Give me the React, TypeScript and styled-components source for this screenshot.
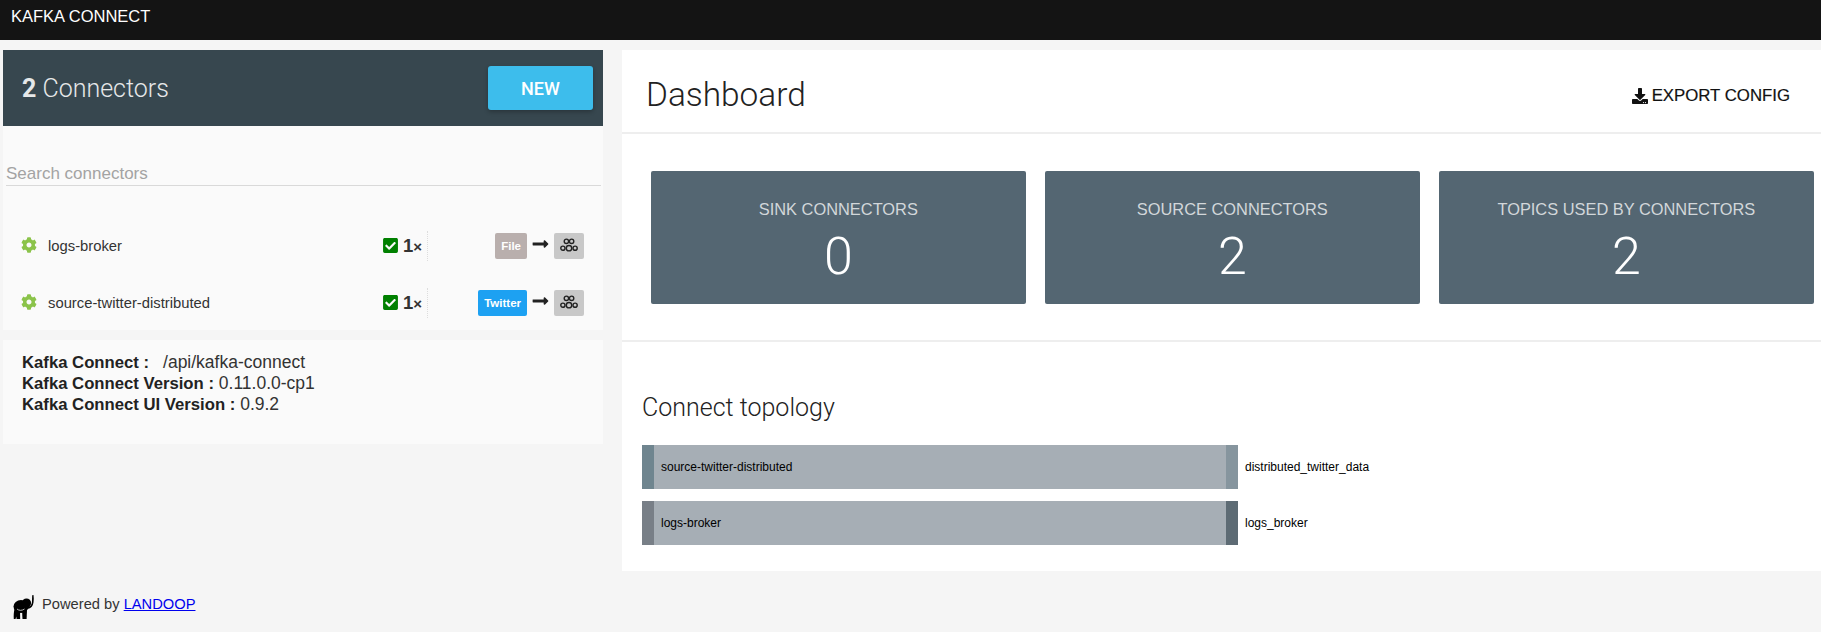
import React from "react";
import styled, { createGlobalStyle } from "styled-components";
import { FaCog, FaCheckSquare, FaDownload, FaLongArrowAltRight } from "react-icons/fa";

const GlobalStyle = createGlobalStyle`
  html, body {
    margin: 0;
    background: #f5f5f5;
    font-family: "Liberation Sans", Arial, sans-serif;
    color: #222;
  }
`;

const connectors = [
  { name: "logs-broker", tag: "File", tagColor: "#b9afad" },
  { name: "source-twitter-distributed", tag: "Twitter", tagColor: "#1da1f2" },
];

const topology = [
  { name: "source-twitter-distributed", topic: "distributed_twitter_data", from: "#6f858f", to: "#86959e" },
  { name: "logs-broker", topic: "logs_broker", from: "#787f87", to: "#5d6b74" },
];

const stats = [
  { label: "SINK CONNECTORS", value: 0 },
  { label: "SOURCE CONNECTORS", value: 2 },
  { label: "TOPICS USED BY CONNECTORS", value: 2 },
];

function KafkaIcon() {
  return (
    <svg width="18" height="15" viewBox="0 0 18 15" fill="none" stroke="#222" strokeWidth="1.4">
      <circle cx="6.4" cy="3.3" r="2.2" />
      <circle cx="11.6" cy="3.3" r="2.2" />
      <circle cx="9" cy="10.2" r="2.7" />
      <circle cx="2.9" cy="10.2" r="2.1" />
      <circle cx="15.1" cy="10.2" r="2.1" />
    </svg>
  );
}

function Elephant() {
  return (
    <svg width="21" height="25" viewBox="0 0 21 25" fill="#000">
      <ellipse cx="8" cy="11.5" rx="7.5" ry="6.5" />
      <circle cx="13.5" cy="8" r="4.6" />
      <path d="M14 11.5c3.500.5 4.800-2 5-5 .1-2 0-4 .2-6.200l1.300-.3c.4 2.500.4 5 0 7.500-.5 3.500-2.500 6-6 6.500z" />
      <path d="M1.500 14h5.500l.2 10H3.600l-.4-2.500-.6 2.500H.8c-.3-3.500 0-7 .7-10z" />
      <path d="M9 15h5l-.4 9H9.500z" />
      <path d="M4 14c2 1.800 5 1.800 7.500 0" fill="none" stroke="#fff" strokeWidth=".7" />
    </svg>
  );
}

export default function App() {
  return (
    <>
      <GlobalStyle />
      <TopBar>KAFKA CONNECT</TopBar>
      <Layout>
        <Sidebar>
          <div>
            <SidebarHeader>
              <Count>
                <strong>2</strong> Connectors
              </Count>
              <NewButton>NEW</NewButton>
            </SidebarHeader>
            <ConnectorPanel>
              <Search placeholder="Search connectors" />
              {connectors.map((c) => (
                <ConnectorRow key={c.name}>
                  <GearIcon />
                  <ConnectorName>{c.name}</ConnectorName>
                  <Tasks>
                    <CheckIcon />
                    <TaskCount>
                      1<small>×</small>
                    </TaskCount>
                  </Tasks>
                  <Flow>
                    <Tag $color={c.tagColor}>{c.tag}</Tag>
                    <ArrowIcon />
                    <KafkaTag>
                      <KafkaIcon />
                    </KafkaTag>
                  </Flow>
                </ConnectorRow>
              ))}
            </ConnectorPanel>
          </div>
          <InfoPanel>
            <InfoLine>
              <b>Kafka Connect :</b>
              <InfoUrl>/api/kafka-connect</InfoUrl>
            </InfoLine>
            <InfoLine>
              <b>Kafka Connect Version :</b> 0.11.0.0-cp1
            </InfoLine>
            <InfoLine>
              <b>Kafka Connect UI Version :</b> 0.9.2
            </InfoLine>
          </InfoPanel>
        </Sidebar>
        <Main>
          <MainHeader>
            <Title>Dashboard</Title>
            <ExportButton>
              <FaDownload size={16} />
              EXPORT CONFIG
            </ExportButton>
          </MainHeader>
          <Stats>
            {stats.map((s) => (
              <StatCard key={s.label}>
                <StatLabel>{s.label}</StatLabel>
                <StatValue>{s.value}</StatValue>
              </StatCard>
            ))}
          </Stats>
          <Topology>
            <TopologyTitle>Connect topology</TopologyTitle>
            {topology.map((t) => (
              <Link key={t.name}>
                <LinkBar $from={t.from} $to={t.to}>
                  {t.name}
                </LinkBar>
                <Topic>{t.topic}</Topic>
              </Link>
            ))}
          </Topology>
        </Main>
      </Layout>
      <Footer>
        <Elephant />
        <span>
          Powered by <a href="#landoop">LANDOOP</a>
        </span>
      </Footer>
    </>
  );
}

const TopBar = styled.div`
  height: 40px;
  background: #141414;
  color: #fff;
  font-size: 16.5px;
  line-height: 16px;
  padding: 8px 0 0 11px;
  box-sizing: border-box;
`;

const Layout = styled.div`
  display: flex;
  align-items: flex-start;
  padding: 10px 0 0 3px;
  gap: 19px;
`;

const Sidebar = styled.div`
  width: 600px;
  display: flex;
  flex-direction: column;
  gap: 10px;
`;

const SidebarHeader = styled.div`
  height: 76px;
  background: #37474f;
  display: flex;
  align-items: center;
  justify-content: space-between;
  padding: 0 10px 0 19px;
`;

const Count = styled.div`
  font-family: Roboto, sans-serif;
  font-weight: 300;
  font-size: 25px;
  color: #e6e8e9;
  strong {
    font-weight: 700;
  }
`;

const NewButton = styled.button`
  width: 105px;
  height: 44px;
  border: 0;
  border-radius: 3px;
  background: #3dbdec;
  color: #fff;
  font-family: Roboto, sans-serif;
  font-size: 18px;
  font-weight: 500;
  box-shadow: 0 2px 4px rgba(0, 0, 0, 0.25);
`;

const ConnectorPanel = styled.div`
  background: #fafafa;
  height: 204px;
  padding-top: 36px;
  box-sizing: border-box;
`;

const Search = styled.input`
  display: block;
  box-sizing: border-box;
  width: 595px;
  height: 24px;
  margin: 0 0 31px 3px;
  padding: 0;
  border: 0;
  border-bottom: 1px solid #d9d9d9;
  background: transparent;
  font-family: inherit;
  font-size: 17px;
  &::placeholder {
    color: #a3a3a3;
  }
`;

const ConnectorRow = styled.div`
  height: 57px;
  display: flex;
  align-items: center;
  padding: 0 19px 0 18px;
`;

const GearIcon = styled(FaCog)`
  width: 16px;
  height: 16px;
  color: #8bc34a;
  margin: -1px 11px 0 0;
`;

const ConnectorName = styled.div`
  font-size: 14.8px;
  color: #333;
  flex: 1;
`;

const Tasks = styled.div`
  display: flex;
  align-items: center;
  width: 45px;
  height: 30px;
  gap: 4px;
  border-right: 1px dotted #ddd;
  box-sizing: border-box;
`;

const CheckIcon = styled(FaCheckSquare)`
  width: 17px;
  height: 17px;
  color: #008000;
  margin-left: -1px;
`;

const TaskCount = styled.div`
  font-size: 18.5px;
  font-weight: 700;
  color: #333;
  small {
    font-size: 15px;
  }
`;

const Flow = styled.div`
  width: 156px;
  display: flex;
  justify-content: flex-end;
  align-items: center;
  gap: 5px;
`;

const ArrowIcon = styled(FaLongArrowAltRight)`
  width: 17px;
  height: 18px;
  color: #222;
  margin-top: -4px;
`;

const Tag = styled.div<{ $color: string }>`
  height: 26px;
  padding: 0 6px;
  min-width: 19px;
  border-radius: 2px;
  background: ${(p) => p.$color};
  color: #fff;
  font-size: 11.5px;
  font-weight: 700;
  line-height: 26px;
  text-align: center;
`;

const KafkaTag = styled.div`
  width: 30px;
  height: 26px;
  border-radius: 2px;
  background: #c8c8c8;
  display: flex;
  align-items: center;
  justify-content: center;
`;

const InfoPanel = styled.div`
  background: #fafafa;
  height: 104px;
  box-sizing: border-box;
  padding: 12px 19px 0;
`;

const InfoLine = styled.div`
  font-size: 17.5px;
  line-height: 21px;
  color: #333;
  b {
    color: #222;
    font-size: 16.7px;
  }
`;

const InfoUrl = styled.span`
  margin-left: 14px;
`;

const Main = styled.div`
  flex: 1;
  background: #fff;
  height: 521px;
`;

const MainHeader = styled.div`
  height: 84px;
  border-bottom: 2px solid #eee;
  display: flex;
  align-items: center;
  justify-content: space-between;
  padding: 6px 31px 0 24px;
  box-sizing: border-box;
`;

const Title = styled.div`
  font-family: Roboto, sans-serif;
  font-weight: 300;
  font-size: 33.4px;
  color: #222;
`;

const ExportButton = styled.div`
  display: flex;
  align-items: center;
  gap: 4px;
  margin-top: 3px;
  font-size: 16.8px;
  color: #111;
  -webkit-text-stroke: 0.2px #111;
`;

const Stats = styled.div`
  height: 208px;
  border-bottom: 2px solid #eee;
  display: grid;
  grid-template-columns: repeat(3, 374.7px);
  gap: 19.3px;
  padding: 37px 0 0 29px;
  box-sizing: border-box;
`;

const StatCard = styled.div`
  height: 133px;
  background: #546672;
  border-radius: 2px;
  text-align: center;
`;

const StatLabel = styled.div`
  margin-top: 29px;
  font-size: 16.4px;
  color: #d2d7da;
`;

const StatValue = styled.div`
  font-family: Roboto, sans-serif;
  font-weight: 300;
  font-size: 52px;
  line-height: 60px;
  margin-top: 8px;
  color: #fff;
`;

const Topology = styled.div`
  padding: 51px 0 0 20px;
`;

const TopologyTitle = styled.div`
  font-family: Roboto, sans-serif;
  font-weight: 300;
  font-size: 25px;
  line-height: 30px;
  color: #222;
  margin-bottom: 22px;
`;

const Link = styled.div`
  display: flex;
  align-items: center;
  height: 44px;
  margin-bottom: 12px;
`;

const LinkBar = styled.div<{ $from: string; $to: string }>`
  width: 596px;
  height: 44px;
  line-height: 44px;
  box-sizing: border-box;
  padding-left: 7px;
  font-size: 12px;
  color: #000;
  background: #a6aeb5;
  border-left: 12px solid ${(p) => p.$from};
  border-right: 12px solid ${(p) => p.$to};
`;

const Topic = styled.div`
  margin-left: 7px;
  font-size: 12px;
  color: #000;
`;

const Footer = styled.div`
  display: flex;
  align-items: flex-start;
  gap: 8px;
  margin: 24px 0 0 13px;
  font-size: 14.7px;
  line-height: 18px;
  color: #333;
  a {
    color: #00e;
  }
`;
